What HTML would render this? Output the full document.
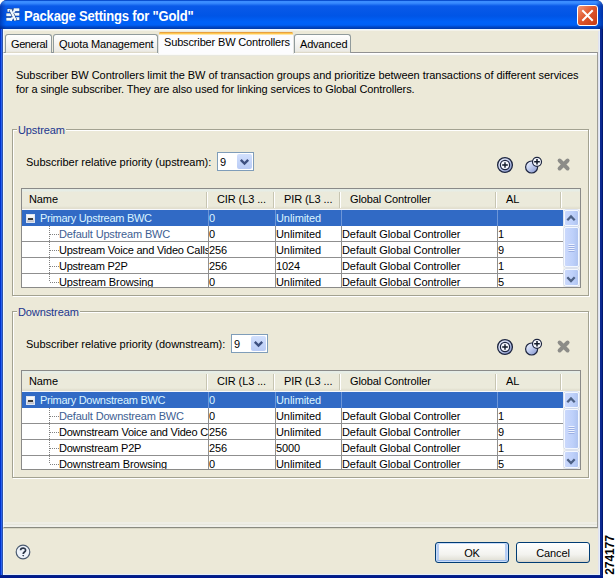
<!DOCTYPE html>
<html><head><meta charset="utf-8">
<style>
*{margin:0;padding:0;box-sizing:border-box}
html,body{width:616px;height:578px;overflow:hidden;background:#fff}
body{position:relative;font-family:"Liberation Sans",sans-serif;font-size:11px;color:#000;letter-spacing:-0.1px}
.a{position:absolute}
.t{position:absolute;white-space:pre;line-height:16px}
#win{left:0;top:0;width:603px;height:578px;background:linear-gradient(90deg,#0032cc 0,#0032cc 1px,#2a62ee 1px,#2a62ee 2px,#2e52a8 2px,#2e52a8 3px,#0a2890 3px,#0a2890 602px,#001870 602px);border-radius:7px 7px 0 0}
#title{left:0;top:0;width:603px;height:29px;border-radius:7px 7px 0 0;
 background:linear-gradient(#0a4fd0 0,#0a4fd0 1px,#3d8eff 1px,#3a8cff 3px,#0a5ae8 6px,#0055e6 16px,#0062f8 22px,#0060f5 25px,#0047c8 27px,#003aa8 29px)}
#client{left:3px;top:29px;width:597px;height:546px;background:#ece9d8;box-shadow:inset 1px 1px 0 #f0f8ff, inset 0 2px 0 #f3f2ea, inset -1px -1px 0 #e4eefc, inset -2px 0 0 #e2e2ee}
.tab{position:absolute;top:34px;height:19px;border:1px solid #919b9c;border-bottom:none;border-radius:3px 3px 0 0;
 background:linear-gradient(#fff,#ecebe6 90%,#d8d2bd)}
.tab span{position:absolute;top:3px;left:5px;white-space:pre;line-height:13px;letter-spacing:-0.2px}
#panel{left:3px;top:52px;width:595px;height:476px;border:1px solid #919191;border-left-color:#f0f8ff;border-right-color:#9c9c94;border-bottom-color:#8a8a80;
 background:linear-gradient(#fff 0,#fff 1px,#fafaf8 1px,#fafaf8 2px,#e8e8e0 2px,#e8e8e0 3px,#ece9d8 3px,#ece9d8 469px,#efeee6 469px,#efeee6 471px,#e6e6dc 471px,#e6e6dc 472px,#f0f0ea 472px,#f0f0ea 474px);
 box-shadow:0 1px 0 #d8d6c4}
.grp{position:absolute;border:1px solid #a3a291;box-shadow:1px 1px 0 #fff, inset 1px 1px 0 #fff}
.glabel{position:absolute;background:#ece9d8;color:#21368e;padding:0 1px;line-height:14px}
.combo{position:absolute;width:37px;height:19px;border:1px solid #7f9db9;background:#fff}
.combo .v{position:absolute;left:2px;top:1px;line-height:16px}
.combo .btn{position:absolute;right:1px;top:1px;width:15px;height:15px;border-radius:2px;
 background:linear-gradient(#d2e0fd,#b9cbf5)}
.tbl{position:absolute;border:1px solid #8a8a88;background:#fff;overflow:hidden}
.hdr{position:absolute;left:0;top:0;height:20px;background:linear-gradient(#e6ede6 0,#e6ede6 2px,#ebeadb 3px,#ebeadb 17px,#e2dfcf 19px,#e2dfcf 20px)}
.hdiv{position:absolute;top:3px;width:2px;height:16px;border-left:1px solid #c7c5b2;border-right:1px solid #fff}
.sel{position:absolute;background:#316ac5}
.gh{position:absolute;height:1px;background:#8f8f8f}
.gv{position:absolute;width:1px;background:#8f8f8f}
.sb{position:absolute;width:17px;background:#f3f3ef}
.sbb{position:absolute;left:1px;width:15px;border:1px solid #f4f8ff;border-radius:2px;background:linear-gradient(90deg,#cad8fc,#bdd0fa 60%,#b0c4f0);box-shadow:0 0 0 0.5px #c4d0ec}
.btn2{position:absolute;height:21px;border:1px solid #003c74;border-radius:3px;background:linear-gradient(#fff,#f3f3ef 60%,#e2e1d7 90%,#d6d0c5)}
.btn2 span{position:absolute;left:0;right:0;top:4px;text-align:center;line-height:13px;letter-spacing:-0.15px}
</style></head><body>
<div id="win" class="a"></div>
<div id="title" class="a"></div>
<div class="a" style="left:0;top:0;width:603px;height:29px;border-radius:7px 7px 0 0;background:linear-gradient(90deg,rgba(0,20,110,0.45) 0,rgba(0,20,110,0.2) 3px,transparent 6px,transparent 596px,rgba(0,20,110,0.25) 599px,rgba(0,20,110,0.55) 603px)"></div>
<!-- title icon -->
<svg class="a" style="left:6px;top:8px" width="14" height="14" viewBox="0 0 14 14">
 <g fill="#eefaff" stroke="#0a2a6a" stroke-width="0.6" paint-order="stroke">
  <rect x="1.4" y="0.9" width="4.8" height="2.9"/><rect x="0.3" y="5.3" width="5.7" height="2.9"/><rect x="0.3" y="9.8" width="5.7" height="2.9"/>
  <rect x="7.6" y="0.3" width="5.8" height="2.9"/><rect x="7.8" y="4.8" width="5.6" height="2.9"/><rect x="7.8" y="9.2" width="5.6" height="2.9"/>
 </g>
 <path d="M4.4 1.4 L9.6 12.4" stroke="#0a2a6a" stroke-width="3.4"/>
 <path d="M4.4 1.4 L9.6 12.4" stroke="#eefaff" stroke-width="2.4"/>
 <path d="M9.4 1.2 L7.2 4.8 M6.8 9.2 L4.6 12.8" stroke="#eefaff" stroke-width="2"/>
</svg>
<div class="t" style="left:24px;top:7px;color:#fff;font-weight:bold;font-size:14px;letter-spacing:-0.2px;line-height:18px;transform:scaleX(0.93);transform-origin:0 0">Package Settings for "Gold"</div>
<!-- close button -->
<div class="a" style="left:577px;top:5px;width:21px;height:21px;border:1px solid #fff;border-radius:3px;background:linear-gradient(135deg,#f29878,#e0582e 45%,#c63a12)"></div>
<svg class="a" style="left:577px;top:5px" width="21" height="21" viewBox="0 0 21 21"><path d="M6 6 L15 15 M15 6 L6 15" stroke="#fff" stroke-width="2" stroke-linecap="square"/></svg>

<div id="client" class="a"></div>
<div id="panel" class="a"></div>

<!-- tabs -->
<div class="tab" style="left:5px;width:47px"><span style="left:5px;letter-spacing:-0.4px">General</span></div>
<div class="tab" style="left:53px;width:105px"><span style="left:5px;letter-spacing:-0.17px">Quota Management</span></div>
<div class="tab" style="left:294px;width:57px"><span style="left:5px">Advanced</span></div>
<div class="a" style="left:158px;top:32px;width:136px;height:22px;border-left:1px solid #e4e4e0;border-right:1px solid #e4e4e0;border-radius:2px 2px 0 0;background:linear-gradient(#e8a040 0,#e8a040 1px,#ffc850 1px,#ffc850 2px,#ffe6a8 2px,#ffe6a8 3px,#fcfcfe 3px)"></div>
<div class="t" style="left:164px;top:34px;line-height:16px;letter-spacing:-0.15px">Subscriber BW Controllers</div>

<!-- description -->
<div class="t" style="left:16px;top:68px;line-height:14px;letter-spacing:-0.05px">Subscriber BW Controllers limit the BW of transaction groups and prioritize between transactions of different services</div>
<div class="t" style="left:16px;top:82px;line-height:14px;letter-spacing:-0.09px">for a single subscriber. They are also used for linking services to Global Controllers.</div>

<!-- GROUPS -->
<div class="grp" style="left:12px;top:129px;width:577px;height:167px"></div>
<div class="glabel" style="left:17px;top:123px">Upstream</div>
<div class="t" style="left:26px;top:154px;letter-spacing:-0.03px">Subscriber relative priority (upstream):</div>
<div class="combo" style="left:217px;top:152px"><span class="v">9</span><span class="btn"></span></div>
<svg class="a" style="left:237px;top:153px" width="15" height="17" viewBox="0 0 15 17"><path d="M3.8 6.8 L7.5 10.5 L11.2 6.8" fill="none" stroke="#3d5080" stroke-width="2.4"/></svg>
<svg class="a" style="left:495px;top:155px" width="80" height="22" viewBox="0 0 80 22">
 <defs>
  <linearGradient id="g10" x1="0" y1="0" x2="1" y2="1"><stop offset="0" stop-color="#f4f6fe"/><stop offset="0.5" stop-color="#c2cdee"/><stop offset="1" stop-color="#7888c0"/></linearGradient>
  <linearGradient id="g20" x1="0" y1="0" x2="0.8" y2="1"><stop offset="0" stop-color="#f4f7ff"/><stop offset="0.5" stop-color="#c4d0f0"/><stop offset="1" stop-color="#8a9ad0"/></linearGradient>
 </defs>
 <circle cx="10" cy="10" r="7.4" fill="url(#g10)" stroke="#1e2640" stroke-width="1.3"/>
 <circle cx="10" cy="10" r="4.6" fill="#f6f8fe" stroke="#1e2640" stroke-width="1.2"/>
 <path d="M10 7.2 V12.8 M7.2 10 H12.8" stroke="#101828" stroke-width="1.4"/>
 <circle cx="36.6" cy="12" r="6.0" fill="url(#g20)" stroke="#1e2640" stroke-width="1.2"/>
 <circle cx="42" cy="6.8" r="4.5" fill="#f6f8fe" stroke="#1e2640" stroke-width="1.2"/>
 <path d="M42 4 V9.6 M39.2 6.8 H44.8" stroke="#101828" stroke-width="1.5"/>
 <path d="M64.6 5.5 L72.6 13.5 M72.6 5.5 L64.6 13.5" stroke="#8c8c88" stroke-width="3.9" stroke-linecap="round"/>
</svg>
<div class="tbl" style="left:21px;top:188px;width:560px;height:100px">
<div class="hdr" style="width:558px"></div><div class="a" style="left:0;top:20px;width:558px;height:1px;background:#f6f8fc"></div>
<div class="hdiv" style="left:184px"></div>
<div class="hdiv" style="left:251px"></div>
<div class="hdiv" style="left:317px"></div>
<div class="hdiv" style="left:473px"></div>
<div class="hdiv" style="left:538px"></div>
<div class="t" style="left:7px;top:2px">Name</div>
<div class="t" style="left:195px;top:2px">CIR (L3 ...</div>
<div class="t" style="left:262px;top:2px">PIR (L3 ...</div>
<div class="t" style="left:328px;top:2px">Global Controller</div>
<div class="t" style="left:484px;top:2px">AL</div>
<div class="sel" style="left:0;top:21px;width:541px;height:16px"></div>
<div class="gh" style="left:0;top:52px;width:541px"></div>
<div class="gh" style="left:0;top:68px;width:541px"></div>
<div class="gh" style="left:0;top:84px;width:541px"></div>
<div class="gv" style="left:186px;top:37px;height:62px"></div>
<div class="a" style="left:186px;top:21px;width:1px;height:16px;background:#6d96d8"></div>
<div class="gv" style="left:253px;top:37px;height:62px"></div>
<div class="a" style="left:253px;top:21px;width:1px;height:16px;background:#6d96d8"></div>
<div class="gv" style="left:319px;top:37px;height:62px"></div>
<div class="a" style="left:319px;top:21px;width:1px;height:16px;background:#6d96d8"></div>
<div class="gv" style="left:475px;top:37px;height:62px"></div>
<div class="a" style="left:475px;top:21px;width:1px;height:16px;background:#6d96d8"></div>
<div class="t" style="left:18px;top:21px;color:#dcf4ff;width:168px;overflow:hidden;letter-spacing:-0.28px">Primary Upstream BWC</div>
<div class="t" style="left:187px;top:21px;color:#dcf4ff;width:66px;overflow:hidden;letter-spacing:-0.08px">0</div>
<div class="t" style="left:254px;top:21px;color:#dcf4ff;width:65px;overflow:hidden;letter-spacing:-0.08px">Unlimited</div>
<div class="t" style="left:320px;top:21px;color:#dcf4ff;width:155px;overflow:hidden;letter-spacing:-0.08px"></div>
<div class="t" style="left:476px;top:21px;color:#dcf4ff;width:64px;overflow:hidden;letter-spacing:-0.08px"></div>
<div class="t" style="left:37px;top:37px;color:#3d5e92;width:149px;overflow:hidden;letter-spacing:-0.16px">Default Upstream BWC</div>
<div class="t" style="left:187px;top:37px;color:#000;width:66px;overflow:hidden;letter-spacing:-0.08px">0</div>
<div class="t" style="left:254px;top:37px;color:#000;width:65px;overflow:hidden;letter-spacing:-0.08px">Unlimited</div>
<div class="t" style="left:320px;top:37px;color:#000;width:155px;overflow:hidden;letter-spacing:-0.08px">Default Global Controller</div>
<div class="t" style="left:476px;top:37px;color:#000;width:64px;overflow:hidden;letter-spacing:-0.08px">1</div>
<div class="t" style="left:37px;top:53px;color:#000;width:149px;overflow:hidden;letter-spacing:-0.22px">Upstream Voice and Video Calls</div>
<div class="t" style="left:187px;top:53px;color:#000;width:66px;overflow:hidden;letter-spacing:-0.08px">256</div>
<div class="t" style="left:254px;top:53px;color:#000;width:65px;overflow:hidden;letter-spacing:-0.08px">Unlimited</div>
<div class="t" style="left:320px;top:53px;color:#000;width:155px;overflow:hidden;letter-spacing:-0.08px">Default Global Controller</div>
<div class="t" style="left:476px;top:53px;color:#000;width:64px;overflow:hidden;letter-spacing:-0.08px">9</div>
<div class="t" style="left:37px;top:69px;color:#000;width:149px;overflow:hidden;letter-spacing:-0.25px">Upstream P2P</div>
<div class="t" style="left:187px;top:69px;color:#000;width:66px;overflow:hidden;letter-spacing:-0.08px">256</div>
<div class="t" style="left:254px;top:69px;color:#000;width:65px;overflow:hidden;letter-spacing:-0.08px">1024</div>
<div class="t" style="left:320px;top:69px;color:#000;width:155px;overflow:hidden;letter-spacing:-0.08px">Default Global Controller</div>
<div class="t" style="left:476px;top:69px;color:#000;width:64px;overflow:hidden;letter-spacing:-0.08px">1</div>
<div class="t" style="left:37px;top:85px;color:#000;width:149px;overflow:hidden;letter-spacing:-0.1px">Upstream Browsing</div>
<div class="t" style="left:187px;top:85px;color:#000;width:66px;overflow:hidden;letter-spacing:-0.08px">0</div>
<div class="t" style="left:254px;top:85px;color:#000;width:65px;overflow:hidden;letter-spacing:-0.08px">Unlimited</div>
<div class="t" style="left:320px;top:85px;color:#000;width:155px;overflow:hidden;letter-spacing:-0.08px">Default Global Controller</div>
<div class="t" style="left:476px;top:85px;color:#000;width:64px;overflow:hidden;letter-spacing:-0.08px">5</div>
<div class="a" style="left:4px;top:25px;width:9px;height:9px;border:1px solid #dfe6f2;background:linear-gradient(#fdfdfd,#eeeef0 40%,#bfc0c8)"></div>
<div class="a" style="left:6px;top:29px;width:5px;height:2px;background:#000;transform:scaleY(0.75)"></div>
<div class="a" style="left:27px;top:37px;width:1px;height:56px;background:repeating-linear-gradient(#808080 0 1px,transparent 1px 2px)"></div>
<div class="a" style="left:28px;top:45px;width:9px;height:1px;background:repeating-linear-gradient(90deg,#808080 0 1px,transparent 1px 2px)"></div>
<div class="a" style="left:28px;top:61px;width:9px;height:1px;background:repeating-linear-gradient(90deg,#808080 0 1px,transparent 1px 2px)"></div>
<div class="a" style="left:28px;top:77px;width:9px;height:1px;background:repeating-linear-gradient(90deg,#808080 0 1px,transparent 1px 2px)"></div>
<div class="a" style="left:28px;top:93px;width:9px;height:1px;background:repeating-linear-gradient(90deg,#808080 0 1px,transparent 1px 2px)"></div>
<div class="sb" style="left:541px;top:21px;height:78px"></div>
<div class="sbb" style="left:542px;top:21px;height:16px"></div>
<div class="sbb" style="left:542px;top:38px;height:40px"></div>
<div class="sbb" style="left:542px;top:80px;height:17px"></div>
</div>
<svg class="a" style="left:563px;top:210px" width="17" height="78" viewBox="0 0 17 78"><path d="M4.3 10.2 L8 6.5 L11.7 10.2" fill="none" stroke="#4d6185" stroke-width="2.3"/><path d="M5.5 34.5 H11.5 M5.5 36.5 H11.5 M5.5 38.5 H11.5 M5.5 40.5 H11.5" stroke="#eef3ff" stroke-width="1"/><path d="M5.5 35.5 H11.5 M5.5 37.5 H11.5 M5.5 39.5 H11.5 M5.5 41.5 H11.5" stroke="#9cb0e4" stroke-width="1"/><path d="M4.3 67.3 L8 71 L11.7 67.3" fill="none" stroke="#4d6185" stroke-width="2.3"/></svg>
<div class="grp" style="left:12px;top:311px;width:577px;height:167px"></div>
<div class="glabel" style="left:17px;top:305px">Downstream</div>
<div class="t" style="left:26px;top:336px;letter-spacing:-0.03px">Subscriber relative priority (downstream):</div>
<div class="combo" style="left:231px;top:334px"><span class="v">9</span><span class="btn"></span></div>
<svg class="a" style="left:251px;top:335px" width="15" height="17" viewBox="0 0 15 17"><path d="M3.8 6.8 L7.5 10.5 L11.2 6.8" fill="none" stroke="#3d5080" stroke-width="2.4"/></svg>
<svg class="a" style="left:495px;top:337px" width="80" height="22" viewBox="0 0 80 22">
 <defs>
  <linearGradient id="g1182" x1="0" y1="0" x2="1" y2="1"><stop offset="0" stop-color="#f4f6fe"/><stop offset="0.5" stop-color="#c2cdee"/><stop offset="1" stop-color="#7888c0"/></linearGradient>
  <linearGradient id="g2182" x1="0" y1="0" x2="0.8" y2="1"><stop offset="0" stop-color="#f4f7ff"/><stop offset="0.5" stop-color="#c4d0f0"/><stop offset="1" stop-color="#8a9ad0"/></linearGradient>
 </defs>
 <circle cx="10" cy="10" r="7.4" fill="url(#g1182)" stroke="#1e2640" stroke-width="1.3"/>
 <circle cx="10" cy="10" r="4.6" fill="#f6f8fe" stroke="#1e2640" stroke-width="1.2"/>
 <path d="M10 7.2 V12.8 M7.2 10 H12.8" stroke="#101828" stroke-width="1.4"/>
 <circle cx="36.6" cy="12" r="6.0" fill="url(#g2182)" stroke="#1e2640" stroke-width="1.2"/>
 <circle cx="42" cy="6.8" r="4.5" fill="#f6f8fe" stroke="#1e2640" stroke-width="1.2"/>
 <path d="M42 4 V9.6 M39.2 6.8 H44.8" stroke="#101828" stroke-width="1.5"/>
 <path d="M64.6 5.5 L72.6 13.5 M72.6 5.5 L64.6 13.5" stroke="#8c8c88" stroke-width="3.9" stroke-linecap="round"/>
</svg>
<div class="tbl" style="left:21px;top:370px;width:560px;height:100px">
<div class="hdr" style="width:558px"></div><div class="a" style="left:0;top:20px;width:558px;height:1px;background:#f6f8fc"></div>
<div class="hdiv" style="left:184px"></div>
<div class="hdiv" style="left:251px"></div>
<div class="hdiv" style="left:317px"></div>
<div class="hdiv" style="left:473px"></div>
<div class="hdiv" style="left:538px"></div>
<div class="t" style="left:7px;top:2px">Name</div>
<div class="t" style="left:195px;top:2px">CIR (L3 ...</div>
<div class="t" style="left:262px;top:2px">PIR (L3 ...</div>
<div class="t" style="left:328px;top:2px">Global Controller</div>
<div class="t" style="left:484px;top:2px">AL</div>
<div class="sel" style="left:0;top:21px;width:541px;height:16px"></div>
<div class="gh" style="left:0;top:52px;width:541px"></div>
<div class="gh" style="left:0;top:68px;width:541px"></div>
<div class="gh" style="left:0;top:84px;width:541px"></div>
<div class="gv" style="left:186px;top:37px;height:62px"></div>
<div class="a" style="left:186px;top:21px;width:1px;height:16px;background:#6d96d8"></div>
<div class="gv" style="left:253px;top:37px;height:62px"></div>
<div class="a" style="left:253px;top:21px;width:1px;height:16px;background:#6d96d8"></div>
<div class="gv" style="left:319px;top:37px;height:62px"></div>
<div class="a" style="left:319px;top:21px;width:1px;height:16px;background:#6d96d8"></div>
<div class="gv" style="left:475px;top:37px;height:62px"></div>
<div class="a" style="left:475px;top:21px;width:1px;height:16px;background:#6d96d8"></div>
<div class="t" style="left:18px;top:21px;color:#dcf4ff;width:168px;overflow:hidden;letter-spacing:-0.28px">Primary Downstream BWC</div>
<div class="t" style="left:187px;top:21px;color:#dcf4ff;width:66px;overflow:hidden;letter-spacing:-0.08px">0</div>
<div class="t" style="left:254px;top:21px;color:#dcf4ff;width:65px;overflow:hidden;letter-spacing:-0.08px">Unlimited</div>
<div class="t" style="left:320px;top:21px;color:#dcf4ff;width:155px;overflow:hidden;letter-spacing:-0.08px"></div>
<div class="t" style="left:476px;top:21px;color:#dcf4ff;width:64px;overflow:hidden;letter-spacing:-0.08px"></div>
<div class="t" style="left:37px;top:37px;color:#3d5e92;width:149px;overflow:hidden;letter-spacing:-0.16px">Default Downstream BWC</div>
<div class="t" style="left:187px;top:37px;color:#000;width:66px;overflow:hidden;letter-spacing:-0.08px">0</div>
<div class="t" style="left:254px;top:37px;color:#000;width:65px;overflow:hidden;letter-spacing:-0.08px">Unlimited</div>
<div class="t" style="left:320px;top:37px;color:#000;width:155px;overflow:hidden;letter-spacing:-0.08px">Default Global Controller</div>
<div class="t" style="left:476px;top:37px;color:#000;width:64px;overflow:hidden;letter-spacing:-0.08px">1</div>
<div class="t" style="left:37px;top:53px;color:#000;width:149px;overflow:hidden;letter-spacing:-0.22px">Downstream Voice and Video Calls</div>
<div class="t" style="left:187px;top:53px;color:#000;width:66px;overflow:hidden;letter-spacing:-0.08px">256</div>
<div class="t" style="left:254px;top:53px;color:#000;width:65px;overflow:hidden;letter-spacing:-0.08px">Unlimited</div>
<div class="t" style="left:320px;top:53px;color:#000;width:155px;overflow:hidden;letter-spacing:-0.08px">Default Global Controller</div>
<div class="t" style="left:476px;top:53px;color:#000;width:64px;overflow:hidden;letter-spacing:-0.08px">9</div>
<div class="t" style="left:37px;top:69px;color:#000;width:149px;overflow:hidden;letter-spacing:-0.25px">Downstream P2P</div>
<div class="t" style="left:187px;top:69px;color:#000;width:66px;overflow:hidden;letter-spacing:-0.08px">256</div>
<div class="t" style="left:254px;top:69px;color:#000;width:65px;overflow:hidden;letter-spacing:-0.08px">5000</div>
<div class="t" style="left:320px;top:69px;color:#000;width:155px;overflow:hidden;letter-spacing:-0.08px">Default Global Controller</div>
<div class="t" style="left:476px;top:69px;color:#000;width:64px;overflow:hidden;letter-spacing:-0.08px">1</div>
<div class="t" style="left:37px;top:85px;color:#000;width:149px;overflow:hidden;letter-spacing:-0.1px">Downstream Browsing</div>
<div class="t" style="left:187px;top:85px;color:#000;width:66px;overflow:hidden;letter-spacing:-0.08px">0</div>
<div class="t" style="left:254px;top:85px;color:#000;width:65px;overflow:hidden;letter-spacing:-0.08px">Unlimited</div>
<div class="t" style="left:320px;top:85px;color:#000;width:155px;overflow:hidden;letter-spacing:-0.08px">Default Global Controller</div>
<div class="t" style="left:476px;top:85px;color:#000;width:64px;overflow:hidden;letter-spacing:-0.08px">5</div>
<div class="a" style="left:4px;top:25px;width:9px;height:9px;border:1px solid #dfe6f2;background:linear-gradient(#fdfdfd,#eeeef0 40%,#bfc0c8)"></div>
<div class="a" style="left:6px;top:29px;width:5px;height:2px;background:#000;transform:scaleY(0.75)"></div>
<div class="a" style="left:27px;top:37px;width:1px;height:56px;background:repeating-linear-gradient(#808080 0 1px,transparent 1px 2px)"></div>
<div class="a" style="left:28px;top:45px;width:9px;height:1px;background:repeating-linear-gradient(90deg,#808080 0 1px,transparent 1px 2px)"></div>
<div class="a" style="left:28px;top:61px;width:9px;height:1px;background:repeating-linear-gradient(90deg,#808080 0 1px,transparent 1px 2px)"></div>
<div class="a" style="left:28px;top:77px;width:9px;height:1px;background:repeating-linear-gradient(90deg,#808080 0 1px,transparent 1px 2px)"></div>
<div class="a" style="left:28px;top:93px;width:9px;height:1px;background:repeating-linear-gradient(90deg,#808080 0 1px,transparent 1px 2px)"></div>
<div class="sb" style="left:541px;top:21px;height:78px"></div>
<div class="sbb" style="left:542px;top:21px;height:16px"></div>
<div class="sbb" style="left:542px;top:38px;height:40px"></div>
<div class="sbb" style="left:542px;top:80px;height:17px"></div>
</div>
<svg class="a" style="left:563px;top:392px" width="17" height="78" viewBox="0 0 17 78"><path d="M4.3 10.2 L8 6.5 L11.7 10.2" fill="none" stroke="#4d6185" stroke-width="2.3"/><path d="M5.5 34.5 H11.5 M5.5 36.5 H11.5 M5.5 38.5 H11.5 M5.5 40.5 H11.5" stroke="#eef3ff" stroke-width="1"/><path d="M5.5 35.5 H11.5 M5.5 37.5 H11.5 M5.5 39.5 H11.5 M5.5 41.5 H11.5" stroke="#9cb0e4" stroke-width="1"/><path d="M4.3 67.3 L8 71 L11.7 67.3" fill="none" stroke="#4d6185" stroke-width="2.3"/></svg>
<!-- bottom -->
<svg class="a" style="left:15px;top:544px" width="16" height="16" viewBox="0 0 16 16">
 <circle cx="8" cy="8" r="6.8" fill="#eef3fb" stroke="#4a5a70" stroke-width="1.2"/>
 <path d="M5.6 6.3 C5.6 3.5 10.6 3.5 10.6 6.2 C10.6 7.9 8.2 8.1 8.2 10" fill="none" stroke="#2a3548" stroke-width="1.7"/>
 <path d="M7.2 11 H9.2 L8.2 12.8 Z" fill="#2a3548"/>
</svg>
<div class="btn2" style="left:435px;top:542px;width:74px;box-shadow:inset 0 0 0 1px #c9dcf9, inset 0 -1px 0 1px #98b8ec, inset 2px 0 0 1px #b6cdf3, inset -2px 0 0 1px #b6cdf3"><span>OK</span></div>
<div class="btn2" style="left:516px;top:542px;width:74px"><span>Cancel</span></div>
<div class="a" style="left:0;top:575px;width:603px;height:3px;background:linear-gradient(#0c2a84,#001a8c 50%,#00188c)"></div>
<div class="t" style="left:589.5px;top:549px;transform:rotate(-90deg);transform-origin:center;width:40px;height:12px;line-height:12px;font-size:12px;font-weight:bold;letter-spacing:-0.1px;text-align:center">274177</div>

</body></html>
